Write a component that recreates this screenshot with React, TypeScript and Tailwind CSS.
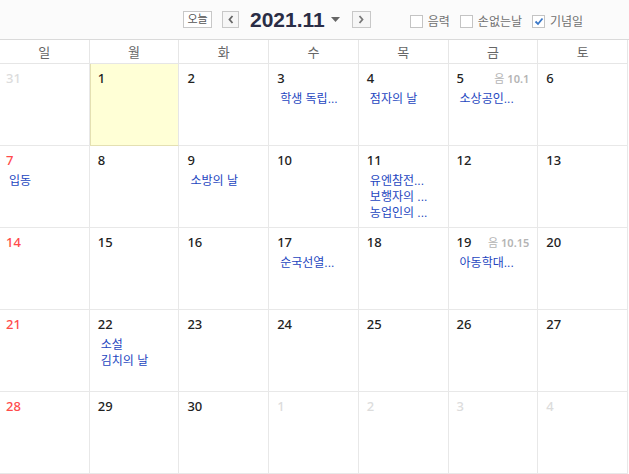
import React from 'react';

type Day = {
  d: number;
  out?: boolean;
  today?: boolean;
  lunar?: string;
  events?: string[];
};

const WEEKDAYS = ['일', '월', '화', '수', '목', '금', '토'];

const WEEKS: Day[][] = [
  [
    { d: 31, out: true },
    { d: 1, today: true },
    { d: 2 },
    { d: 3, events: ['학생 독립...'] },
    { d: 4, events: ['점자의 날'] },
    { d: 5, lunar: '10.1', events: ['소상공인...'] },
    { d: 6 },
  ],
  [
    { d: 7, events: ['입동'] },
    { d: 8 },
    { d: 9, events: ['소방의 날'] },
    { d: 10 },
    { d: 11, events: ['유엔참전...', '보행자의 ...', '농업인의 ...'] },
    { d: 12 },
    { d: 13 },
  ],
  [
    { d: 14 },
    { d: 15 },
    { d: 16 },
    { d: 17, events: ['순국선열...'] },
    { d: 18 },
    { d: 19, lunar: '10.15', events: ['아동학대...'] },
    { d: 20 },
  ],
  [
    { d: 21 },
    { d: 22, events: ['소설', '김치의 날'] },
    { d: 23 },
    { d: 24 },
    { d: 25 },
    { d: 26 },
    { d: 27 },
  ],
  [
    { d: 28 },
    { d: 29 },
    { d: 30 },
    { d: 1, out: true },
    { d: 2, out: true },
    { d: 3, out: true },
    { d: 4, out: true },
  ],
];

function Checkbox({ label, checked }: { label: string; checked?: boolean }) {
  return (
    <label className="flex items-center gap-[5px] text-[12px] text-[#707070]">
      <span className="w-[13px] h-[13px] border border-[#c4c4c4] bg-white flex items-center justify-center">
        {checked && (
          <svg width="10" height="9" viewBox="0 0 10 9">
            <path d="M1.5 4.5 L4 7 L8.5 1.5" fill="none" stroke="#3b78c8" strokeWidth="1.8" />
          </svg>
        )}
      </span>
      {label}
    </label>
  );
}

function DayCell({ day, col }: { day: Day; col: number }) {
  let numColor = 'text-[#222]';
  if (day.out) numColor = 'text-[#dcdcdc]';
  else if (col === 0) numColor = 'text-[#ff4b4b]';

  return (
    <div
      className={
        'h-[82px] border-b border-r flex flex-col ' +
        (col === 0 ? 'pl-[6px] pr-[8px] ' : 'pl-[8px] pr-[8px] ') +
        (day.today
          ? 'bg-[#ffffd6] border-b-[#e4e0b2] border-r-[#e6e6e6] shadow-[inset_1px_0_0_#e4e0b2]'
          : 'border-[#e8e8e8]')
      }
    >
      <div className="flex items-center justify-between h-[25px] pt-[4px]">
        <span
          className={'text-[13px] font-medium ' + numColor}
          style={{ fontFamily: '"Noto Sans", "Liberation Sans", sans-serif' }}
        >
          {day.d}
        </span>
        {day.lunar && (
          <span className="text-[11px] text-[#b4b4b4] pt-[2px]">
            음 <span className="font-semibold" style={{ fontFamily: '"Noto Sans", sans-serif' }}>{day.lunar}</span>
          </span>
        )}
      </div>
      {day.events && (
        <div className="pl-[3px] pt-[2px] flex flex-col">
          {day.events.map((e) => (
            <span key={e} className="text-[12px] leading-[16px] text-[#2446c0] whitespace-nowrap">
              {e}
            </span>
          ))}
        </div>
      )}
    </div>
  );
}

export default function App() {
  return (
    <div
      className="w-[629px] h-[474px] bg-white overflow-hidden"
      style={{ fontFamily: '"Liberation Sans", "Noto Sans CJK KR", sans-serif' }}
    >
      {/* Toolbar */}
      <div className="h-[40px] bg-[#fbfbfb] border-b border-[#dadada] flex items-center pl-[183px]">
        <button className="w-[29px] h-[17px] border border-[#c8c8c8] bg-white text-[11px] text-[#555] leading-none flex items-center justify-center">
          오늘
        </button>
        <button className="ml-[10px] w-[17px] h-[17px] border border-[#c8c8c8] bg-[#f6f6f6] flex items-center justify-center">
          <svg width="6" height="9" viewBox="0 0 6 9">
            <path d="M4.5 1 L1.5 4.5 L4.5 8" fill="none" stroke="#666" strokeWidth="1.8" />
          </svg>
        </button>
        <span className="ml-[11px] text-[21px] font-bold text-[#2a2d45] leading-none">2021.11</span>
        <svg className="ml-[6px]" width="9" height="5" viewBox="0 0 9 5">
          <path d="M0 0 L9 0 L4.5 5 Z" fill="#666" />
        </svg>
        <button className="ml-[12px] w-[19px] h-[17px] border border-[#c8c8c8] bg-[#f6f6f6] flex items-center justify-center">
          <svg width="6" height="9" viewBox="0 0 6 9">
            <path d="M1.5 1 L4.5 4.5 L1.5 8" fill="none" stroke="#777" strokeWidth="1.8" />
          </svg>
        </button>
        <div className="ml-[39px] mt-[4px] flex items-center gap-[10px]">
          <Checkbox label="음력" />
          <Checkbox label="손없는날" />
          <Checkbox label="기념일" checked />
        </div>
      </div>

      {/* Weekday header */}
      <div className="w-[628px] grid grid-cols-7">
        {WEEKDAYS.map((w) => (
          <div
            key={w}
            className="h-[24px] border-b border-r border-[#e6e6e6] flex items-center justify-center pt-[2px] text-[13px] text-[#666]"
          >
            {w}
          </div>
        ))}
      </div>

      {/* Days */}
      <div className="w-[628px] grid grid-cols-7">
        {WEEKS.map((week, wi) =>
          week.map((day, ci) => <DayCell key={wi + '-' + ci} day={day} col={ci} />)
        )}
      </div>
    </div>
  );
}
